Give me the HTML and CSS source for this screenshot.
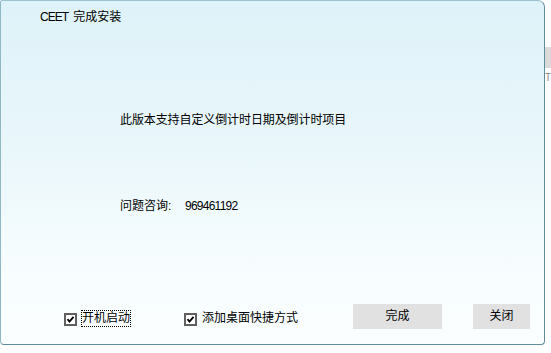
FILE: index.html
```html
<!DOCTYPE html>
<html>
<head>
<meta charset="utf-8">
<link rel="stylesheet" href="styles.css">
</head>
<body>
<div class="page">
  <div class="window">
    <div class="title"><span class="title-latin">CEET</span> 完成安装</div>
    <div class="message">此版本支持自定义倒计时日期及倒计时项目</div>
    <div class="contact"><span class="contact-label">问题咨询:</span><span class="contact-num">969461192</span></div>
    <div class="footer">
      <label class="check check-first">
        <svg class="box" width="13" height="13" viewBox="0 0 13 13"><rect x="1" y="1" width="11" height="11" fill="#fff" stroke="#5f5f5f" stroke-width="2"/><path d="M3.5 6.2 L5.5 8.5 L9.5 3.8" fill="none" stroke="#000" stroke-width="1.8"/></svg>
        <span class="label focused">开机启动</span>
      </label>
      <label class="check check-second">
        <svg class="box" width="13" height="13" viewBox="0 0 13 13"><rect x="1" y="1" width="11" height="11" fill="#fff" stroke="#5f5f5f" stroke-width="2"/><path d="M3.5 6.2 L5.5 8.5 L9.5 3.8" fill="none" stroke="#000" stroke-width="1.8"/></svg>
        <span class="label">添加桌面快捷方式</span>
      </label>
      <div class="btn btn-finish">完成</div>
      <div class="btn btn-close">关闭</div>
    </div>
  </div>
  <div class="side">
    <div class="side-block"></div>
    <div class="side-text">Th</div>
  </div>
</div>
</body>
</html>
```
FILE: styles.css
```css
html, body {
  margin: 0;
  padding: 0;
  background: #ffffff;
}
body {
  width: 551px;
  height: 353px;
  overflow: hidden;
  font-family: "Liberation Sans", "Noto Sans CJK SC", sans-serif;
  font-size: 12px;
  color: #000;
}
.page {
  display: flex;
  align-items: flex-start;
}
.window {
  box-sizing: border-box;
  width: 545px;
  height: 345px;
  border: 1px solid #5e8e9b;
  border-top-color: #9cc3cf;
  border-left-color: #8fb8c4;
  border-radius: 2px 7px 4px 4px;
  background: linear-gradient(to bottom, #def2f9 0%, #eaf7fb 45%, #f8fdff 80%, #fafeff 100%);
  display: flex;
  flex-direction: column;
  flex-shrink: 0;
}
.title {
  margin: 9px 0 0 39px;
  height: 14px;
  line-height: 14px;
  word-spacing: 2px;
}
.title-latin {
  letter-spacing: -1px;
}
.message {
  margin: 89px 0 0 119px;
  height: 14px;
  line-height: 14px;
  letter-spacing: -0.1px;
}
.contact {
  margin: 72px 0 0 119px;
  height: 14px;
  line-height: 14px;
  display: flex;
}
.contact-label {
  width: 65px;
}
.contact-num {
  font-size: 12px;
  letter-spacing: -0.75px;
}
.footer {
  margin-top: 91px;
  display: flex;
  align-items: flex-start;
  height: 25px;
}
.check {
  display: flex;
  align-items: center;
  margin-top: 6px;
}
.check-first {
  margin-left: 63px;
}
.check-second {
  margin-left: 53px;
}
.box {
  display: block;
  flex-shrink: 0;
  margin-top: 1px;
}
.label {
  font-size: 12px;
  line-height: 15px;
  padding: 0 0;
  margin-left: 4px;
  border: 1px dotted transparent;
}
.check-second .label {
  margin-left: 4px;
}
.label.focused {
  border-color: #000;
}
.btn {
  height: 25px;
  line-height: 25px;
  background: #e1e1e1;
  text-align: center;
}
.btn-finish {
  width: 89px;
  margin-left: 54px;
}
.btn-close {
  width: 57px;
  margin-left: 31px;
}
.side {
  display: flex;
  flex-direction: column;
  width: 6px;
  padding-top: 47px;
  overflow: hidden;
}
.side-block {
  height: 21px;
  background: #dadada;
}
.side-text {
  margin-top: 4px;
  font-size: 10px;
  line-height: 11px;
  color: #8a8a8a;
}
```
